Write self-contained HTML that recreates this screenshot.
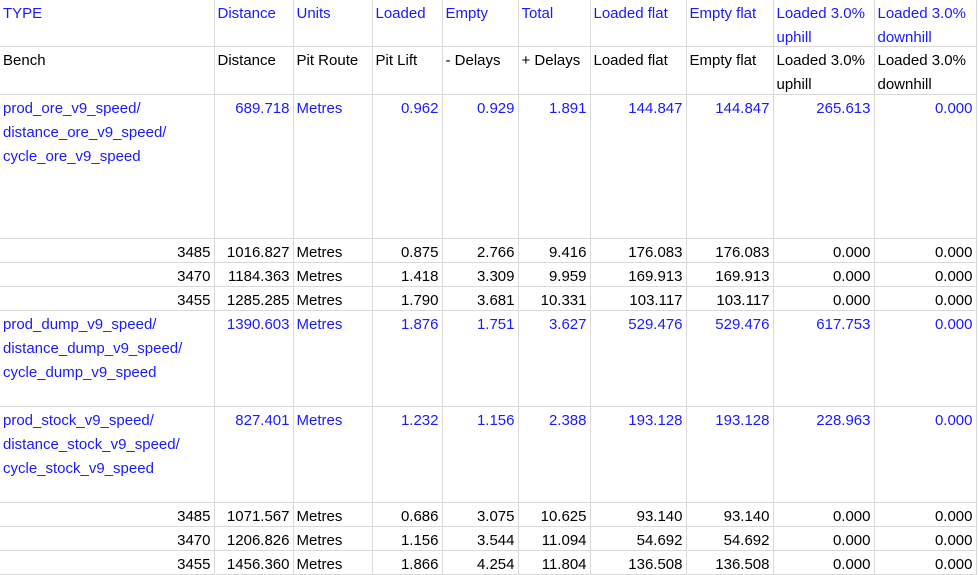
<!DOCTYPE html>
<html><head><meta charset="utf-8"><style>
html,body{margin:0;padding:0;background:#fff;width:978px;height:575px;overflow:hidden}
table{border-collapse:collapse;table-layout:fixed;font-family:"Liberation Sans",sans-serif;font-size:15px;line-height:24px;color:#000}
td{border:1px solid #d9d9d9;vertical-align:top;padding:0 3px;overflow:hidden;white-space:nowrap}
td div{overflow:visible;box-sizing:border-box;padding-top:2px}
td.w{white-space:normal}
.b td{color:#1a1aff}
.r{text-align:right}
tr:first-child td{border-top:none}
td:first-child{border-left:none}
.h24 td div{height:23px}
.h47 td div{height:46px}
.h48 td div{height:47px}
.h144 td div{height:143px}
.h96 td div{height:95px}
</style></head><body>
<table>
<colgroup><col style="width:214px"><col style="width:79px"><col style="width:79px"><col style="width:70px"><col style="width:76px"><col style="width:72px"><col style="width:96px"><col style="width:87px"><col style="width:101px"><col style="width:102px"></colgroup>
<tr class="b h47"><td><div>TYPE</div></td><td><div>Distance</div></td><td><div>Units</div></td><td><div>Loaded</div></td><td><div>Empty</div></td><td><div>Total</div></td><td><div>Loaded flat</div></td><td><div>Empty flat</div></td><td class="w"><div>Loaded 3.0% uphill</div></td><td class="w"><div>Loaded 3.0% downhill</div></td></tr>
<tr class="h48"><td><div>Bench</div></td><td><div>Distance</div></td><td><div>Pit Route</div></td><td><div>Pit Lift</div></td><td><div>- Delays</div></td><td><div>+ Delays</div></td><td><div>Loaded flat</div></td><td><div>Empty flat</div></td><td class="w"><div>Loaded 3.0% uphill</div></td><td class="w"><div>Loaded 3.0% downhill</div></td></tr>
<tr class="b h144"><td><div>prod_ore_v9_speed/<br>distance_ore_v9_speed/<br>cycle_ore_v9_speed</div></td><td class="r"><div>689.718</div></td><td><div>Metres</div></td><td class="r"><div>0.962</div></td><td class="r"><div>0.929</div></td><td class="r"><div>1.891</div></td><td class="r"><div>144.847</div></td><td class="r"><div>144.847</div></td><td class="r"><div>265.613</div></td><td class="r"><div>0.000</div></td></tr>
<tr class="h24"><td class="r"><div>3485</div></td><td class="r"><div>1016.827</div></td><td><div>Metres</div></td><td class="r"><div>0.875</div></td><td class="r"><div>2.766</div></td><td class="r"><div>9.416</div></td><td class="r"><div>176.083</div></td><td class="r"><div>176.083</div></td><td class="r"><div>0.000</div></td><td class="r"><div>0.000</div></td></tr>
<tr class="h24"><td class="r"><div>3470</div></td><td class="r"><div>1184.363</div></td><td><div>Metres</div></td><td class="r"><div>1.418</div></td><td class="r"><div>3.309</div></td><td class="r"><div>9.959</div></td><td class="r"><div>169.913</div></td><td class="r"><div>169.913</div></td><td class="r"><div>0.000</div></td><td class="r"><div>0.000</div></td></tr>
<tr class="h24"><td class="r"><div>3455</div></td><td class="r"><div>1285.285</div></td><td><div>Metres</div></td><td class="r"><div>1.790</div></td><td class="r"><div>3.681</div></td><td class="r"><div>10.331</div></td><td class="r"><div>103.117</div></td><td class="r"><div>103.117</div></td><td class="r"><div>0.000</div></td><td class="r"><div>0.000</div></td></tr>
<tr class="b h96"><td><div>prod_dump_v9_speed/<br>distance_dump_v9_speed/<br>cycle_dump_v9_speed</div></td><td class="r"><div>1390.603</div></td><td><div>Metres</div></td><td class="r"><div>1.876</div></td><td class="r"><div>1.751</div></td><td class="r"><div>3.627</div></td><td class="r"><div>529.476</div></td><td class="r"><div>529.476</div></td><td class="r"><div>617.753</div></td><td class="r"><div>0.000</div></td></tr>
<tr class="b h96"><td><div>prod_stock_v9_speed/<br>distance_stock_v9_speed/<br>cycle_stock_v9_speed</div></td><td class="r"><div>827.401</div></td><td><div>Metres</div></td><td class="r"><div>1.232</div></td><td class="r"><div>1.156</div></td><td class="r"><div>2.388</div></td><td class="r"><div>193.128</div></td><td class="r"><div>193.128</div></td><td class="r"><div>228.963</div></td><td class="r"><div>0.000</div></td></tr>
<tr class="h24"><td class="r"><div>3485</div></td><td class="r"><div>1071.567</div></td><td><div>Metres</div></td><td class="r"><div>0.686</div></td><td class="r"><div>3.075</div></td><td class="r"><div>10.625</div></td><td class="r"><div>93.140</div></td><td class="r"><div>93.140</div></td><td class="r"><div>0.000</div></td><td class="r"><div>0.000</div></td></tr>
<tr class="h24"><td class="r"><div>3470</div></td><td class="r"><div>1206.826</div></td><td><div>Metres</div></td><td class="r"><div>1.156</div></td><td class="r"><div>3.544</div></td><td class="r"><div>11.094</div></td><td class="r"><div>54.692</div></td><td class="r"><div>54.692</div></td><td class="r"><div>0.000</div></td><td class="r"><div>0.000</div></td></tr>
<tr class="h24"><td class="r"><div>3455</div></td><td class="r"><div>1456.360</div></td><td><div>Metres</div></td><td class="r"><div>1.866</div></td><td class="r"><div>4.254</div></td><td class="r"><div>11.804</div></td><td class="r"><div>136.508</div></td><td class="r"><div>136.508</div></td><td class="r"><div>0.000</div></td><td class="r"><div>0.000</div></td></tr>
</table>
</body></html>
